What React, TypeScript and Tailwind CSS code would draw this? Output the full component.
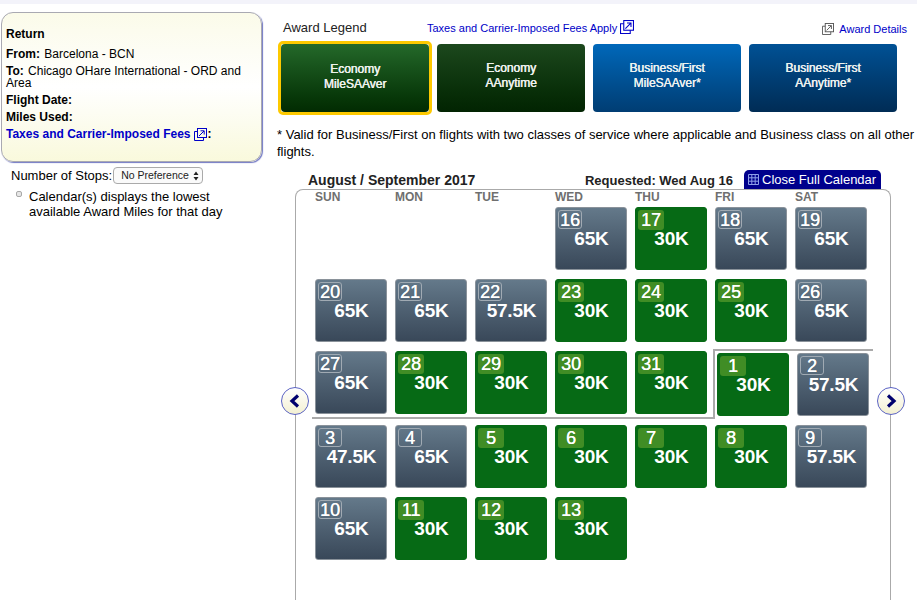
import React from "react";

type Cell = { d: number; p: string; g?: boolean };

function Ext({ c = "#0000c8", s = 13 }: { c?: string; s?: number }) {
  return (
    <svg width={s} height={s} viewBox="0 0 13 13" fill="none" stroke={c} strokeWidth="1" className="inline-block">
      <rect x="3.5" y="0.5" width="9" height="9" />
      <path d="M3.5 3.5H0.5V12.5H9.5V9.5" />
      <path d="M5 8L10 3M6.5 2.8H10.2V6.5" />
    </svg>
  );
}

function DayCell({ d, p, g, className = "" }: Cell & { className?: string }) {
  return (
    <div
      className={`relative h-[63px] w-[72px] shrink-0 rounded-[3px] border font-bold text-white ${
        g
          ? "border-[#066a15] bg-[#066a15]"
          : "border-[#8a929a] bg-gradient-to-b from-[#64798a] to-[#394859]"
      } ${className}`}
    >
      <div
        className={`ml-[2px] mt-[2px] flex items-center justify-center rounded-[3px] text-[18px] font-normal leading-none [text-shadow:0.3px_0_0_#fff] ${
          g ? "h-[20px] w-[26px] bg-[#408d25]" : "h-[19px] w-[24px] border border-[#a0aab3]"
        }`}
      >
        {d}
      </div>
      <div className={`pl-[1px] text-center text-[19px] leading-[22px] tracking-[-0.2px] ${g ? "mt-[-2px]" : "mt-[-1px]"}`}>{p}</div>
    </div>
  );
}

function LegendBtn({ a, b, cls, sel }: { a: string; b: string; cls: string; sel?: boolean }) {
  return (
    <div className={`rounded-[5px] border-[3px] ${sel ? "border-[#fdc900]" : "border-transparent"}`}>
      <div
        className={`flex h-[68px] w-[148px] flex-col items-center justify-center rounded-[4px] text-[12px] font-normal leading-[15px] text-[#eef2ee] [text-shadow:0.4px_0_0_#fff] ${cls}`}
      >
        <span>{a}</span>
        <span>{b}</span>
      </div>
    </div>
  );
}

function Arrow({ dir, className }: { dir: "l" | "r"; className: string }) {
  return (
    <div
      className={`absolute flex h-[28px] w-[28px] items-center justify-center rounded-full border border-[#5b63c4] bg-gradient-to-b from-white to-[#f3f0d2] ${className}`}
    >
      <svg width="14" height="14" viewBox="0 0 14 14">
        <path
          d={dir === "l" ? "M10 1.5L4 7L10 12.5" : "M4 1.5L10 7L4 12.5"}
          fill="none"
          stroke="#00006e"
          strokeWidth="3.2"
        />
      </svg>
    </div>
  );
}

const rows: Cell[][] = [
  [
    { d: 16, p: "65K" },
    { d: 17, p: "30K", g: true },
    { d: 18, p: "65K" },
    { d: 19, p: "65K" },
  ],
  [
    { d: 20, p: "65K" },
    { d: 21, p: "65K" },
    { d: 22, p: "57.5K" },
    { d: 23, p: "30K", g: true },
    { d: 24, p: "30K", g: true },
    { d: 25, p: "30K", g: true },
    { d: 26, p: "65K" },
  ],
  [
    { d: 27, p: "65K" },
    { d: 28, p: "30K", g: true },
    { d: 29, p: "30K", g: true },
    { d: 30, p: "30K", g: true },
    { d: 31, p: "30K", g: true },
    { d: 1, p: "30K", g: true },
    { d: 2, p: "57.5K" },
  ],
  [
    { d: 3, p: "47.5K" },
    { d: 4, p: "65K" },
    { d: 5, p: "30K", g: true },
    { d: 6, p: "30K", g: true },
    { d: 7, p: "30K", g: true },
    { d: 8, p: "30K", g: true },
    { d: 9, p: "57.5K" },
  ],
  [
    { d: 10, p: "65K" },
    { d: 11, p: "30K", g: true },
    { d: 12, p: "30K", g: true },
    { d: 13, p: "30K", g: true },
  ],
];

export default function App() {
  return (
    <div className="relative h-[600px] w-[917px] overflow-hidden bg-white font-['Liberation_Sans',Arial,sans-serif] text-black">
      <div className="h-[4px] bg-[#f3f3fa]" />
      <div className="flex">
        <div className="ml-[1px] mt-[8px] w-[261px] shrink-0">
          <div className="h-[150px] rounded-[12px] border border-[#a9a9b2] bg-gradient-to-b from-[#fbfbe9] via-white to-[#f9f9dc] pl-[4px] pr-[10px] pt-[15px] text-[12px] leading-[12px] shadow-[1px_1px_1px_#7077c4]">
            <div className="font-bold">Return</div>
            <div className="mt-[8px]">
              <b className="mr-[1px]">From:</b> Barcelona - BCN
            </div>
            <div className="mt-[5px]">
              <b className="mr-[1px]">To:</b> Chicago OHare International - ORD and Area
            </div>
            <div className="mt-[5px] font-bold">Flight Date:</div>
            <div className="mt-[5px] font-bold">Miles Used:</div>
            <div className="mt-[5px] flex h-[12px] items-center font-bold">
              <span className="text-[#0000c8]">Taxes and Carrier-Imposed Fees</span>
              <span className="ml-[3px] mr-[1px] flex">
                <Ext />
              </span>
              :
            </div>
          </div>
          <div className="ml-[10px] mt-[5px] flex items-center text-[13px] leading-[17px]">
            <span>Number of Stops:</span>
            <div className="ml-[1px] flex h-[17px] w-[90px] items-center justify-between rounded-[4px] border border-[#aaa] bg-[#fafafa] pl-[7px] pr-[3px] text-[10.5px] text-[#222]">
              <span>No Preference</span>
              <svg width="6" height="10" viewBox="0 0 6 10" fill="#222">
                <path d="M3 0.5L5.5 4H0.5ZM3 9.5L0.5 6H5.5Z" />
              </svg>
            </div>
          </div>
          <div className="ml-[15px] mt-[5px] flex text-[13px] leading-[15px]">
            <div className="mt-[2px] h-[6px] w-[6px] shrink-0 rounded-[2px] border border-[#a8a8a8] bg-[#e6e6e6]" />
            <div className="ml-[7px] w-[220px]">Calendar(s) displays the lowest available Award Miles for that day</div>
          </div>
        </div>

        <div className="relative ml-[16px] flex-1 pt-[13px]">
          <div className="flex h-[23px] items-start">
            <div className="ml-[5px] w-[144px] pt-[3px] text-[13px] leading-[16px] text-[#222]">Award Legend</div>
            <div className="flex items-center pt-[2px] text-[11px] leading-[14px] text-[#0000c8]">
              <span className="pt-[2px]">Taxes and Carrier-Imposed Fees Apply</span>
              <span className="ml-[3px] flex">
                <Ext s={14} />
              </span>
            </div>
            <div className="ml-auto mr-[10px] flex items-center pt-[5px] text-[11px] leading-[14px] text-[#0000c8]">
              <Ext c="#555" s={12} />
              <span className="ml-[5px]">Award Details</span>
            </div>
          </div>
          <div className="mt-[1px] flex gap-[2px]">
            <LegendBtn a="Economy" b="MileSAAver" sel cls="bg-gradient-to-b from-[#24692a] to-[#022b02] pb-[2px]" />
            <LegendBtn a="Economy" b="AAnytime" cls="bg-gradient-to-b from-[#1c481d] to-[#022402] pb-[4px]" />
            <LegendBtn a="Business/First" b="MileSAAver*" cls="bg-gradient-to-b from-[#0068ba] to-[#003d73] pb-[4px]" />
            <LegendBtn a="Business/First" b="AAnytime*" cls="bg-gradient-to-b from-[#005195] to-[#002c55] pb-[4px]" />
          </div>
          <div className="-ml-[1px] mt-[11px] w-[640px] text-[13px] leading-[17px]">
            * Valid for Business/First on flights with two classes of service where applicable and Business class on all other flights.
          </div>
          <div className="ml-[30px] mt-[10px] flex h-[19px] w-[573px] items-end text-[#222]">
            <span className="pb-[1px] text-[14px] font-bold leading-[16px]">August / September 2017</span>
            <span className="ml-auto pb-[1px] text-[13px] font-bold leading-[14px]">Requested: Wed Aug 16</span>
            <div className="ml-[11px] flex h-[19px] w-[137px] items-center rounded-t-[5px] bg-[#00008c] pl-[4px] text-[13px] font-normal text-white">
              <svg width="11" height="11" viewBox="0 0 11 11" fill="none" stroke="#8fa0e8" strokeWidth="1" className="mr-[3px]">
                <path d="M0.5 0.5H10.5V10.5H0.5ZM0.5 3.8H10.5M0.5 7.2H10.5M3.8 0.5V10.5M7.2 0.5V10.5" />
              </svg>
              Close Full Calendar
            </div>
          </div>
          <div className="ml-[17px] h-[420px] w-[596px] rounded-t-[8px] border border-b-0 border-[#aaa] pl-[19px]">
            <div className="flex h-[17px] text-[12px] font-bold leading-[14px] text-[#6f6f6f]">
              {["SUN", "MON", "TUE", "WED", "THU", "FRI", "SAT"].map((d) => (
                <div key={d} className="w-[80px]">
                  {d}
                </div>
              ))}
            </div>
            <div className="flex flex-col">
              {rows.map((r, i) => (
                <div
                  key={i}
                  className={`flex h-[63px] gap-[8px] ${i === 0 ? "ml-[240px]" : ""} ${i === 3 ? "mt-[11px]" : i > 0 ? "mt-[9px]" : ""}`}
                >
                  {r.map((c) => (
                    <DayCell
                      key={c.d}
                      {...c}
                      className={i === 2 && (c.d === 1 || c.d === 2) ? "left-[2px] top-[2px]" : ""}
                    />
                  ))}
                </div>
              ))}
            </div>
          </div>
          {/* month boundary */}
          <div className="absolute left-[435px] top-[345px] h-[69px] w-[160px] border-l-2 border-t-2 border-[#aaa]" />
          <div className="absolute left-[34px] top-[413px] h-[2px] w-[403px] bg-[#aaa]" />
          <Arrow dir="l" className="left-[3px] top-[383px]" />
          <Arrow dir="r" className="left-[599px] top-[383px]" />
        </div>
      </div>
    </div>
  );
}
